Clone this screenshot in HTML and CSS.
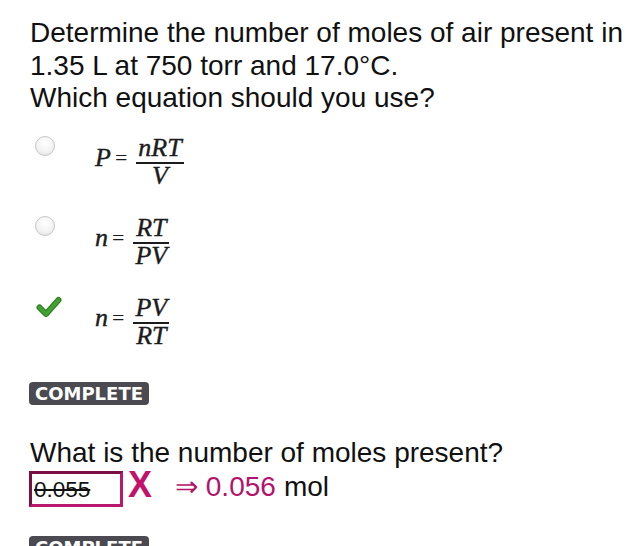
FILE: index.html
```html
<!DOCTYPE html>
<html>
<head>
<meta charset="utf-8">
<link rel="stylesheet" href="styles.css">
</head>
<body>
<div class="page">
  <p class="q">Determine the number of moles of air present in<br>1.35 L at 750 torr and 17.0°C.<br>Which equation should you use?</p>

  <div class="options">
    <div class="option">
      <span class="marker"><span class="radio"></span></span>
      <span class="eq"><span class="lhs">P</span><span class="eqs">=</span><span class="frac"><span class="num">nRT</span><span class="den">V</span></span></span>
    </div>
    <div class="option">
      <span class="marker"><span class="radio"></span></span>
      <span class="eq"><span class="lhs">n</span><span class="eqs">=</span><span class="frac"><span class="num">RT</span><span class="den">PV</span></span></span>
    </div>
    <div class="option">
      <span class="marker">
        <svg class="check" width="26" height="22" viewBox="0 0 26 22"><path d="M3.5 11.5 L10 18 L22.5 4" fill="none" stroke="#2f7d24" stroke-width="6" stroke-linecap="round" stroke-linejoin="round"/><path d="M3.5 11.5 L10 18 L22.5 4" fill="none" stroke="#43a032" stroke-width="3.6" stroke-linecap="round" stroke-linejoin="round"/></svg>
      </span>
      <span class="eq"><span class="lhs">n</span><span class="eqs">=</span><span class="frac"><span class="num">PV</span><span class="den">RT</span></span></span>
    </div>
  </div>

  <div class="badge">COMPLETE</div>

  <p class="q q2">What is the number of moles present?</p>
  <div class="answer">
    <span class="box"><s>0.055</s></span>
    <span class="wrong">X</span>
    <span class="correct">⇒ 0.056</span>
    <span class="unit">mol</span>
  </div>

  <div class="badge badge2">COMPLETE</div>
</div>
</body>
</html>
```

FILE: styles.css
```css
html, body {
  margin: 0;
  padding: 0;
  background: #ffffff;
}
.page {
  padding: 17px 0 0 30px;
  font-family: "Liberation Sans", Arial, sans-serif;
  color: #111111;
}
.q {
  margin: 0;
  font-size: 28px;
  line-height: 32.5px;
}
.options {
  margin-top: 21.5px;
  display: flex;
  flex-direction: column;
}
.option {
  display: flex;
  align-items: flex-start;
  height: 80px;
}
.marker {
  width: 65px;
  display: flex;
  padding-left: 5px;
  box-sizing: border-box;
}
.radio {
  width: 18px;
  height: 18px;
  border-radius: 50%;
  border: 1px solid #c6c6c6;
  background: radial-gradient(circle at 50% 35%, #ffffff 0%, #f3f3f3 55%, #dfdfdf 100%);
}
.check {
  margin-top: 0;
  margin-left: 1px;
}
.eq {
  display: flex;
  align-items: center;
  font-family: "Liberation Serif", "Times New Roman", serif;
  font-style: italic;
  font-size: 26px;
  color: #1c1c1c;
  -webkit-text-stroke: 0.4px #1c1c1c;
}
.lhs {
  line-height: 26px;
  margin-right: 4px;
  margin-bottom: 8px;
}
.eqs {
  font-style: normal;
  font-size: 22px;
  line-height: 26px;
  margin-right: 9px;
  margin-bottom: 8px;
  -webkit-text-stroke: 0;
}
.frac {
  display: inline-flex;
  flex-direction: column;
  align-items: stretch;
  text-align: center;
  line-height: 24px;
}
.num {
  padding: 0 2px 2px;
  border-bottom: 2px solid #1c1c1c;
}
.den {
  padding: 0 2px;
}
.badge {
  display: inline-block;
  background: #4a4a50;
  color: #ffffff;
  font-family: "DejaVu Sans", sans-serif;
  font-weight: bold;
  font-size: 18px;
  line-height: 23px;
  height: 23px;
  padding: 0 6px 0 6px;
  border-radius: 4px;
  margin-left: -1px;
  margin-top: 6px;
}
.q2 {
  margin-top: 32px;
}
.answer {
  display: flex;
  align-items: flex-start;
  height: 36px;
  margin-top: 1.5px;
  margin-left: -1px;
}
.box {
  width: 86px;
  height: 30px;
  border: 3px solid #b8186e;
  border-top-color: #7a0f44;
  border-left-color: #7a0f44;
  font-size: 22.5px;
  line-height: 31px;
  padding-left: 2px;
  color: #111111;
}
.box s {
  text-decoration-thickness: 2px;
}
.wrong {
  font-weight: bold;
  font-size: 36px;
  line-height: 27px;
  height: 27px;
  color: #c2126c;
  margin-left: 5px;
}
.correct {
  font-size: 28px;
  line-height: 32px;
  color: #b3136a;
  margin-left: 23px;
}
.unit {
  font-size: 28px;
  line-height: 32px;
  margin-left: 8px;
}
.badge2 {
  margin-top: 29px;
}
```
